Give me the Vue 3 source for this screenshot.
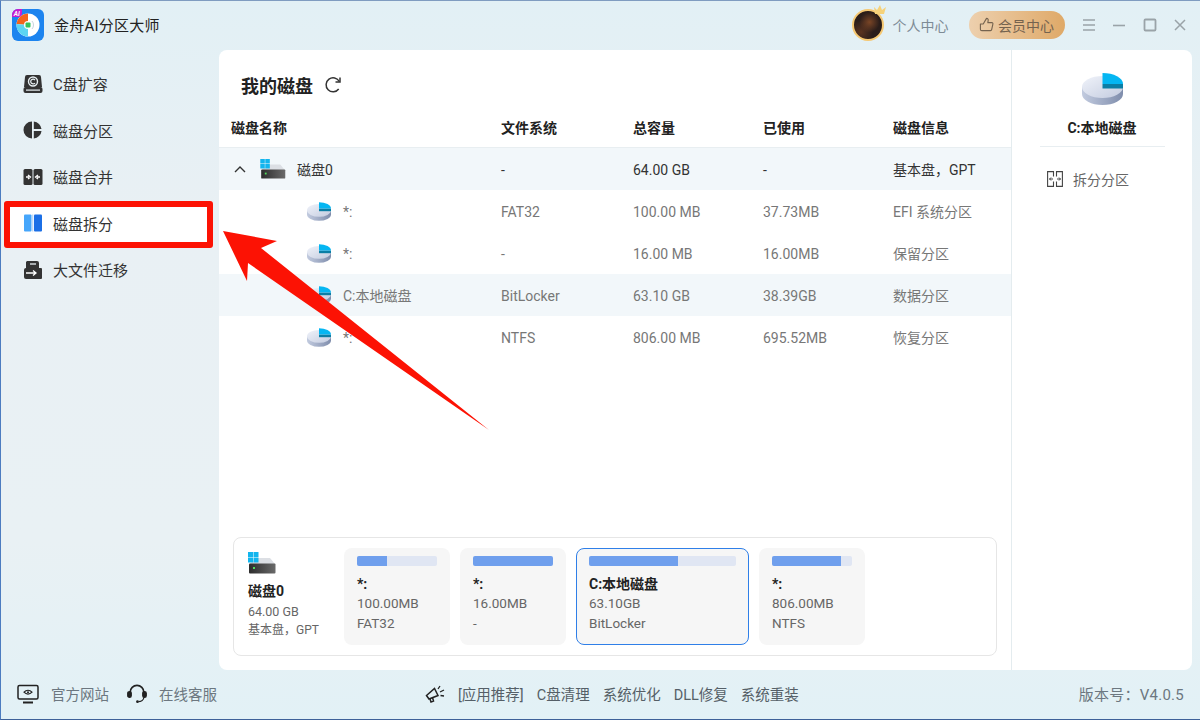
<script setup>
const navItems = [
  { key: "expand", label: "C盘扩容" },
  { key: "part", label: "磁盘分区" },
  { key: "merge", label: "磁盘合并" },
  { key: "split", label: "磁盘拆分", active: true },
  { key: "move", label: "大文件迁移" },
];

const partitions = [
  { name: "*:", fs: "FAT32", total: "100.00 MB", used: "37.73MB", info: "EFI 系统分区" },
  { name: "*:", fs: "-", total: "16.00 MB", used: "16.00MB", info: "保留分区" },
  { name: "C:本地磁盘", fs: "BitLocker", total: "63.10 GB", used: "38.39GB", info: "数据分区", selected: true },
  { name: "*:", fs: "NTFS", total: "806.00 MB", used: "695.52MB", info: "恢复分区" },
];

const cards = [
  { name: "*:", size: "100.00MB", fs: "FAT32", pct: 38 },
  { name: "*:", size: "16.00MB", fs: "-", pct: 100 },
  { name: "C:本地磁盘", size: "63.10GB", fs: "BitLocker", pct: 60.8, selected: true },
  { name: "*:", size: "806.00MB", fs: "NTFS", pct: 86 },
];

const promos = ["[应用推荐]", "C盘清理", "系统优化", "DLL修复", "系统重装"];
</script>

<template>
  <div class="app">
    <svg class="defs" width="0" height="0" aria-hidden="true">
      <defs>
        <linearGradient id="pieTop" x1="0" y1="0" x2="1" y2="1">
          <stop offset="0" stop-color="#f0f3fa" />
          <stop offset="1" stop-color="#c3cbdf" />
        </linearGradient>
        <linearGradient id="pieSide" x1="0" y1="0" x2="1" y2="0">
          <stop offset="0" stop-color="#c2cbdf" />
          <stop offset="1" stop-color="#7f8dac" />
        </linearGradient>
        <linearGradient id="driveBody" x1="0" y1="0" x2="1" y2="0">
          <stop offset="0" stop-color="#2c2c2c" />
          <stop offset="1" stop-color="#6a6a6a" />
        </linearGradient>
        <symbol id="pie" viewBox="0 0 41 32">
          <path d="M0 14v7a20.5 11 0 0 0 41 0v-7z" fill="url(#pieSide)" />
          <ellipse cx="20.5" cy="14" rx="20.5" ry="11" fill="url(#pieTop)" />
          <path d="M20.5 11h20.5v4.500h-20.500z" fill="#0b7ea5" />
          <path d="M20.5 0a20.500 11 0 0 1 20.500 11h-20.500z" fill="#05b6f2" />
        </symbol>
        <symbol id="drive" viewBox="0 0 28 22">
          <path d="M8 6h14l5 6H2z" fill="#dcdfe4" />
          <rect x="1" y="11.500" width="26.500" height="10" rx="1" fill="url(#driveBody)" />
          <rect x="5" y="15" width="2" height="2" fill="#4fdc5a" />
          <path d="M0 0h5v5H0zM5.500 0h5v5h-5zM0 5.500h5v5H0zM5.500 5.500h5v5h-5z" fill="#12b5ee" />
        </symbol>
      </defs>
    </svg>

    <header class="titlebar">
      <div class="brand">
        <svg class="logo" viewBox="0 0 32 32">
          <rect width="32" height="32" rx="6" fill="#1c84ef" />
          <circle cx="16" cy="16" r="11.500" fill="#fff" />
          <path d="M16 16L4.500 15A11.500 11.500 0 0 1 16 4.500z" fill="#f2641c" />
          <path d="M16 16L4.500 15A11.500 11.500 0 0 0 16 27.500z" fill="#5cd4f2" />
          <path d="M20 12a6 6 0 0 1 0 8" fill="none" stroke="#c9d3de" stroke-width="1" />
          <circle cx="16" cy="16" r="4" fill="#fff" />
          <rect x="13.500" y="13.500" width="5" height="5" rx="1" fill="#33c25a" />
          <path d="M0 6a6 6 0 0 1 6-6h4v4a4 4 0 0 1-4 4H0z" fill="#c81bd0" />
          <text x="1.800" y="6.500" class="logo-ai">AI</text>
        </svg>
        <span class="app-name">金舟AI分区大师</span>
      </div>
      <div class="bar-right">
        <div class="avatar">
          <svg class="crown" viewBox="0 0 12 10"><path d="M1 9L0 2l3 3 3-5 2 5 4-3-2 7z" fill="#f6d27a" /></svg>
        </div>
        <span class="user-link">个人中心</span>
        <div class="vip">
          <svg viewBox="0 0 16 16" width="15" height="15" fill="none" stroke="#75634f" stroke-width="1.200" stroke-linejoin="round">
            <path d="M1.500 7.500h3L8 1.500c1.500 0 2 1 1.800 2.200L9.400 6h4.300c.9 0 1.300.7 1.100 1.500l-1.300 6c-.1.600-.6 1-1.200 1H3a1.500 1.500 0 0 1-1.500-1.500z" />
          </svg>
          <span>会员中心</span>
        </div>
        <div class="win-btns">
          <svg viewBox="0 0 14 14" width="14" height="14" stroke="#9aa3a8" stroke-width="1.600"><path d="M1 2h12M1 7h12M1 12h12" /></svg>
          <svg viewBox="0 0 14 14" width="14" height="14" stroke="#9aa3a8" stroke-width="1.600"><path d="M1 7.500h12" /></svg>
          <svg viewBox="0 0 14 14" width="14" height="14" fill="none" stroke="#9aa3a8" stroke-width="1.800"><rect x="1.500" y="1.500" width="11" height="11" rx="1" /></svg>
          <svg viewBox="0 0 14 14" width="14" height="14" stroke="#9aa3a8" stroke-width="1.500"><path d="M2 2l10 10M12 2L2 12" /></svg>
        </div>
      </div>
    </header>

    <div class="body">
      <nav class="sidebar">
        <div v-for="item in navItems" :key="item.key" class="nav-item">
          <i v-if="item.active" class="mark-box"></i>
          <svg class="nav-icon" viewBox="0 0 20 20">
            <template v-if="item.key === 'expand'">
              <path d="M4 1h12a2 2 0 0 1 2 2l1 10H1L2 3a2 2 0 0 1 2-2z" fill="#333" />
              <circle cx="10" cy="7.500" r="4.500" fill="none" stroke="#e8f0f3" stroke-width="1.400" />
              <path d="M12 6a2.400 2.400 0 1 0 0 3" fill="none" stroke="#e8f0f3" stroke-width="1.200" />
              <rect x="0.500" y="13" width="19" height="6" rx="2" fill="#333" />
              <rect x="3" y="15.500" width="14" height="1.200" fill="#e8f0f3" />
            </template>
            <template v-else-if="item.key === 'part'">
              <path d="M9 1.500v17a8.500 8.500 0 0 1 0-17z" fill="#333" />
              <path d="M10.800 1.500a8.500 8.500 0 0 1 7.700 7.600h-7.700z" fill="#333" />
              <path d="M10.800 10.900h7.700a8.500 8.500 0 0 1-7.700 7.600z" fill="#333" />
            </template>
            <template v-else-if="item.key === 'merge'">
              <rect x="0.500" y="2" width="9" height="16" rx="1.500" fill="#333" />
              <rect x="10.500" y="2" width="9" height="16" rx="1.500" fill="#333" />
              <path d="M3 10h3M5 8l2.500 2L5 12M17 10h-3M15 8l-2.500 2 2.500 2" fill="none" stroke="#fff" stroke-width="1.300" />
            </template>
            <template v-else-if="item.key === 'split'">
              <rect x="1" y="1.500" width="7.500" height="17" rx="1" fill="#46a6fb" />
              <rect x="11" y="1.500" width="8" height="17" rx="1" fill="#1b6fe6" />
              <rect x="9.400" y="1.500" width="0.800" height="17" fill="#9cc4f2" />
            </template>
            <template v-else>
              <path d="M4 1h10a2 2 0 0 1 2 2v5H3V2z" fill="#333" />
              <path d="M7 4h6" stroke="#e8f0f3" stroke-width="1.300" />
              <path d="M1 10a2 2 0 0 1 2-2h15a1 1 0 0 1 1 1v9a1 1 0 0 1-1 1H3a2 2 0 0 1-2-2z" fill="#333" />
              <path d="M3 13h10M10 10.500l3 2.500-3 2.500" fill="none" stroke="#fff" stroke-width="1.300" />
            </template>
          </svg>
          <span class="nav-label">{{ item.label }}</span>
        </div>
      </nav>

      <main class="panel">
        <section class="content">
          <div class="heading">
            <h1>我的磁盘</h1>
            <svg viewBox="0 0 18 18" width="18" height="18" fill="none" stroke="#333" stroke-width="1.500">
              <path d="M14.700 13a7 7 0 1 1 .6-7.500" />
              <path d="M16 1.500V6h-4.500" />
            </svg>
          </div>

          <div class="row head">
            <span>磁盘名称</span><span>文件系统</span><span>总容量</span><span>已使用</span><span>磁盘信息</span>
          </div>
          <div class="row disk">
            <span class="name">
              <svg class="chevron" viewBox="0 0 12 8" width="12" height="8" fill="none" stroke="#333" stroke-width="1.400"><path d="M1 7l5-5 5 5" /></svg>
              <svg class="drive-sm"><use href="#drive" /></svg>
              磁盘0
            </span>
            <span>-</span><span>64.00 GB</span><span>-</span><span>基本盘，GPT</span>
          </div>
          <div v-for="p in partitions" :key="p.total" class="row part" :class="{ selected: p.selected }">
            <span class="name">
              <svg class="pie-sm"><use href="#pie" /></svg>
              {{ p.name }}
            </span>
            <span>{{ p.fs }}</span><span>{{ p.total }}</span><span>{{ p.used }}</span><span>{{ p.info }}</span>
          </div>

          <div class="disk-map">
            <div class="map-disk">
              <svg class="drive-lg"><use href="#drive" /></svg>
              <b>磁盘0</b>
              <span class="map-size">64.00 GB</span>
              <span>基本盘，GPT</span>
            </div>
            <div v-for="c in cards" :key="c.size" class="map-card" :class="{ selected: c.selected }">
              <div class="bar"><div class="bar-fill" :style="{ width: c.pct + '%' }"></div></div>
              <b>{{ c.name }}</b>
              <span>{{ c.size }}</span>
              <span>{{ c.fs }}</span>
            </div>
          </div>
        </section>

        <aside class="detail">
          <svg class="pie-lg"><use href="#pie" /></svg>
          <div class="detail-name">C:本地磁盘</div>
          <div class="action">
            <svg viewBox="0 0 16 16" width="16" height="16" fill="none" stroke="#444" stroke-width="1.100">
              <path d="M6.500 5.500V.6H.6v14.800h5.900v-4.900" />
              <path d="M9.500 5.500V.6h5.900v14.800H9.500v-4.900" />
              <path d="M6 8H2.500M4 6.500L2.500 8 4 9.500M10 8h3.500M12 6.500L13.500 8 12 9.500" stroke-width="1" />
            </svg>
            <span>拆分分区</span>
          </div>
        </aside>
      </main>
    </div>

    <footer class="footer">
      <div class="foot-left">
        <div class="foot-link">
          <svg viewBox="0 0 22 20" width="22" height="20" fill="none" stroke="#222" stroke-width="1.500">
            <rect x="1" y="1.500" width="20" height="13.500" rx="1.500" />
            <path d="M6 18.500h10" stroke-width="2" />
            <path d="M7 8.200c2.400-2.600 5.600-2.600 8 0-2.400 2.600-5.600 2.600-8 0z" stroke-width="1.200" />
            <circle cx="11" cy="8.200" r="1" fill="#222" stroke="none" />
          </svg>
          <span>官方网站</span>
        </div>
        <div class="foot-link">
          <svg viewBox="0 0 22 22" width="20" height="20" fill="none" stroke="#222" stroke-width="1.800">
            <path d="M3.500 10V9a7.500 7.500 0 0 1 15 0v1" />
            <rect x="1" y="8.500" width="3.500" height="6" rx="1.700" fill="#222" />
            <rect x="17.500" y="8.500" width="3.500" height="6" rx="1.700" fill="#222" />
            <path d="M18.500 14.500c0 3-3 4.800-6 4.800" stroke-width="1.400" />
            <circle cx="11.500" cy="19.500" r="1.500" fill="#222" stroke="none" />
          </svg>
          <span>在线客服</span>
        </div>
      </div>
      <div class="foot-mid">
        <svg viewBox="0 0 20 18" width="20" height="18" fill="none" stroke="#222" stroke-width="1.500">
          <path d="M1.500 10.500L9.500 3.500 13 10.500 4 14z" />
          <path d="M5 14l1 3 2.500-1-1-3.500" />
          <path d="M13 4l2-3M15 7l4-2M15.500 10.500l3.500.5" stroke-width="1.300" />
        </svg>
        <span v-for="p in promos" :key="p">{{ p }}</span>
      </div>
      <div class="version">版本号：V4.0.5</div>
    </footer>

    <svg class="arrow" viewBox="0 0 1200 720">
      <path d="M223 231L277 241 261 248 489 430 248 263 247 281z" fill="#fc1204" />
    </svg>
  </div>
</template>

<style>
html,
body {
  margin: 0;
  background: #e4f0f5;
}
</style>

<style scoped>
.app {
  position: relative;
  width: 1200px;
  height: 720px;
  box-sizing: border-box;
  display: flex;
  flex-direction: column;
  overflow: hidden;
  font-family: Roboto, "Noto Sans CJK SC", sans-serif;
  font-size: 14px;
  color: #333;
  background: linear-gradient(180deg, #e2f0f5 0, #e9f0f4 30%, #e9f1f4 75%, #e2f1f6 100%);
  border-top: 1px solid #7f9cc0;
  border-left: 1px solid #4c7cc0;
  border-bottom: 1px solid #3d6199;
}

.defs {
  position: absolute;
}

.titlebar {
  height: 49px;
  box-sizing: border-box;
  padding-bottom: 2px;
  display: flex;
  align-items: center;
  justify-content: space-between;
  flex-shrink: 0;
}

.brand {
  display: flex;
  align-items: center;
  padding-left: 11px;
}

.logo {
  width: 32px;
  height: 32px;
}

.logo-ai {
  font-size: 6.500px;
  font-weight: 700;
  font-style: italic;
  fill: #fff;
}

.app-name {
  margin-left: 10px;
  font-size: 15px;
  letter-spacing: 0.25px;
  color: #222;
}

.bar-right {
  display: flex;
  align-items: center;
}

.avatar {
  position: relative;
  width: 28px;
  height: 28px;
  border-radius: 50%;
  border: 2px solid #f5c873;
  background:
    radial-gradient(circle at 55% 40%, #7a4526 0, rgba(122, 69, 38, 0) 45%),
    radial-gradient(circle at 25% 75%, #5a3320 0, rgba(90, 51, 32, 0) 40%),
    #2a1d1a;
}

.crown {
  position: absolute;
  top: -6px;
  right: -4px;
  width: 12px;
  height: 10px;
}

.user-link {
  margin-left: 9px;
  color: #7d8b95;
}

.vip {
  margin-left: 20px;
  width: 96px;
  height: 28px;
  border-radius: 14px;
  display: flex;
  align-items: center;
  justify-content: center;
  gap: 4px;
  color: #75634f;
  background: linear-gradient(90deg, #edd0ae, #dfa968);
}

.win-btns {
  margin-left: 17px;
  margin-right: 13px;
  display: flex;
  align-items: center;
  gap: 16.500px;
}

.body {
  flex: 1;
  display: flex;
  min-height: 0;
}

.sidebar {
  width: 218px;
  flex-shrink: 0;
  padding-top: 10.500px;
}

.nav-item {
  position: relative;
  height: 46.500px;
  display: flex;
  align-items: center;
  padding-left: 22px;
  gap: 10px;
  font-size: 15px;
}

.nav-icon {
  position: relative;
  width: 20px;
  height: 20px;
}

.nav-label {
  position: relative;
}

.mark-box {
  position: absolute;
  left: 3px;
  top: 1px;
  width: 209px;
  height: 47px;
  box-sizing: border-box;
  background: #fff;
  border: 6px solid #fc1204;
  border-radius: 3px;
}

.panel {
  flex: 1;
  margin-right: 8px;
  display: flex;
  background: #fff;
  border-radius: 8px;
}

.content {
  width: 792px;
  display: flex;
  flex-direction: column;
  border-right: 1px solid #e4ecef;
}

.heading {
  height: 57px;
  box-sizing: border-box;
  padding: 13px 0 0 22px;
  display: flex;
  align-items: center;
  gap: 11px;
}

.heading h1 {
  margin: 0;
  font-size: 18px;
  font-weight: 700;
  color: #222;
}

.row {
  display: grid;
  grid-template-columns: 270px 132px 130px 130px 1fr;
  align-items: center;
  box-sizing: border-box;
  height: 42px;
  padding-left: 12px;
}

.row.disk,
.row.part {
  padding-top: 2px;
  line-height: 20px;
}

.row.head {
  height: 41px;
  font-weight: 700;
  color: #222;
  border-bottom: 1px solid #e8eef1;
}

.name {
  display: flex;
  align-items: center;
}

.row.disk {
  background: #f2f7fa;
}

.chevron {
  margin-left: 3px;
  margin-top: -2px;
}

.drive-sm {
  width: 26px;
  height: 20px;
  margin: -2px 11px 0 14px;
}

.row.part {
  color: #777;
}

.row.part .name {
  padding-left: 76px;
}

.row.part.selected {
  background: #f2f7fa;
}

.pie-sm {
  width: 24px;
  height: 19px;
  margin: -2px 12px 0 0;
}

.disk-map {
  margin: auto 14px 14px;
  height: 119px;
  box-sizing: border-box;
  border: 1px solid #e6e6e6;
  border-radius: 8px;
  display: flex;
  gap: 10px;
  padding: 10px;
}

.map-disk {
  width: 86px;
  padding-left: 4px;
  display: flex;
  flex-direction: column;
  font-size: 12px;
  line-height: 19px;
  color: #666;
}

.map-disk b {
  font-size: 14px;
  color: #222;
  margin-top: 6px;
  line-height: 22px;
}

.map-size {
  font-size: 12.500px;
}

.drive-lg {
  width: 28px;
  height: 22px;
  margin-top: 4px;
}

.map-card {
  width: 106px;
  height: 97px;
  box-sizing: border-box;
  padding: 8px 13px;
  border-radius: 8px;
  background: #f6f6f6;
  display: flex;
  flex-direction: column;
  font-size: 13.500px;
  line-height: 19.500px;
  color: #666;
}

.map-card.selected {
  width: 173px;
  border: 1px solid #2f7fe8;
  padding: 7px 12px;
}

.map-card b {
  font-size: 14px;
  color: #222;
  margin-top: 8px;
  line-height: 20px;
}

.bar {
  height: 10px;
  background: #e0e6f3;
  border-radius: 2px;
  overflow: hidden;
}

.bar-fill {
  height: 100%;
  background: #6f9fed;
}

.detail {
  flex: 1;
  display: flex;
  flex-direction: column;
  align-items: center;
}

.pie-lg {
  width: 41px;
  height: 32px;
  margin-top: 23px;
}

.detail-name {
  width: 125px;
  height: 41px;
  line-height: 46px;
  text-align: center;
  font-weight: 700;
  color: #222;
  border-bottom: 1px solid #e8eef1;
}

.action {
  align-self: flex-start;
  margin: 22px 0 0 35px;
  display: flex;
  align-items: center;
  gap: 10px;
  color: #666;
}

.footer {
  height: 49px;
  box-sizing: border-box;
  padding-bottom: 2px;
  flex-shrink: 0;
  display: flex;
  align-items: center;
  font-size: 14.500px;
  color: #6c7780;
}

.foot-left {
  display: flex;
  padding-left: 16px;
  gap: 18px;
}

.foot-link {
  display: flex;
  align-items: center;
  gap: 12px;
}

.foot-mid {
  margin-left: 208px;
  display: flex;
  align-items: center;
  gap: 13px;
  color: #555f67;
}

.version {
  margin-left: auto;
  margin-right: 16px;
  font-size: 15px;
  letter-spacing: 0.25px;
}

.arrow {
  position: absolute;
  left: -1px;
  top: -1px;
  width: 1200px;
  height: 720px;
  pointer-events: none;
}
</style>
